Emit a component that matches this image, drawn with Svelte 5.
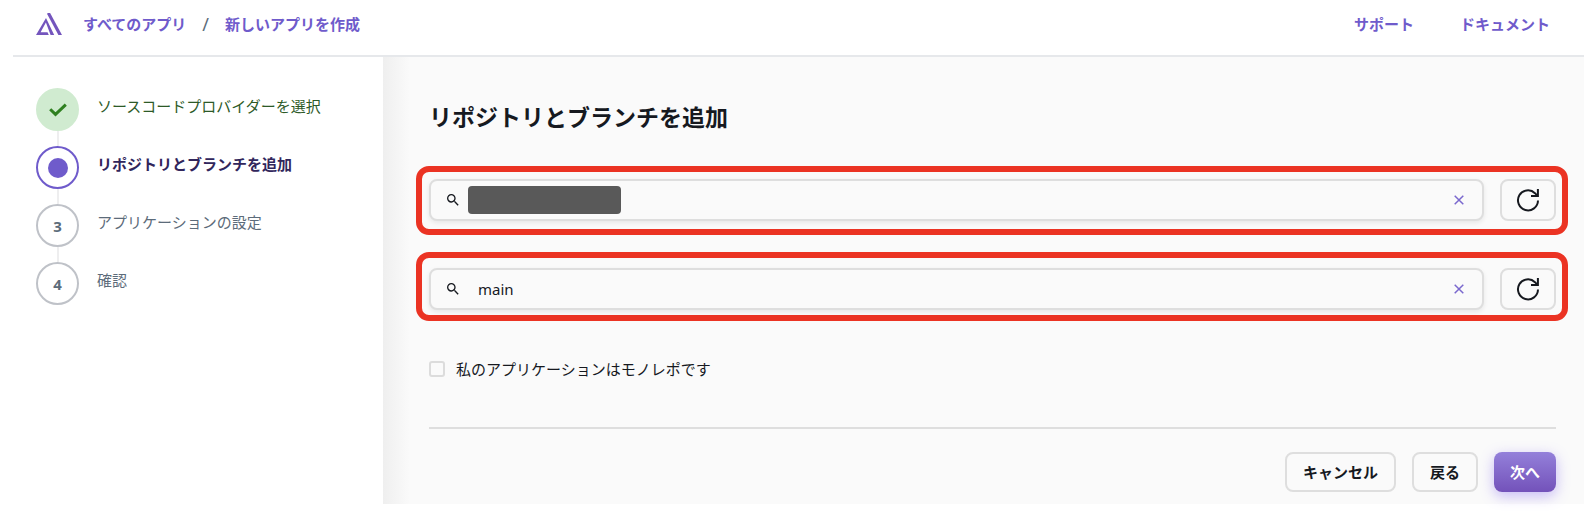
<script lang="ts">
	type StepStatus = 'complete' | 'current' | 'pending';

	interface Step {
		label: string;
		status: StepStatus;
	}

	const steps: Step[] = [
		{ label: 'ソースコードプロバイダーを選択', status: 'complete' },
		{ label: 'リポジトリとブランチを追加', status: 'current' },
		{ label: 'アプリケーションの設定', status: 'pending' },
		{ label: '確認', status: 'pending' }
	];

	let repository = $state('');
	let branch = $state('main');
	let repositoryHidden = $state(true);
	let monorepo = $state(false);

	function clearRepository() {
		repository = '';
		repositoryHidden = false;
	}

	function clearBranch() {
		branch = '';
	}
</script>

{#snippet searchIcon()}
	<svg class="search-icon" viewBox="0 0 24 24" fill="currentColor" aria-hidden="true">
		<path
			d="M15.5 14h-.79l-.28-.27A6.47 6.47 0 0 0 16 9.5 6.5 6.5 0 1 0 9.5 16c1.61 0 3.09-.59 4.23-1.57l.27.28v.79l5 4.99L20.49 19l-4.99-5zm-6 0C7.01 14 5 11.99 5 9.5S7.01 5 9.5 5 14 7.01 14 9.5 11.99 14 9.5 14z"
		/>
	</svg>
{/snippet}

{#snippet clearIcon()}
	<svg viewBox="0 0 10 10" fill="none" stroke="currentColor" stroke-width="1.5" aria-hidden="true">
		<path d="M.7 .7l8.6 8.6M9.3 .7L.7 9.3" />
	</svg>
{/snippet}

{#snippet refreshIcon()}
	<svg viewBox="0 0 22 22" fill="none" stroke="currentColor" stroke-width="2" aria-hidden="true">
		<path d="M21 11.5A10 10 0 1 1 18 4.2L20 6.4" />
		<path d="M20.9 0v7H14" />
	</svg>
{/snippet}

<div class="app">
	<header>
		<nav class="breadcrumb" aria-label="Breadcrumb">
			<a class="logo" href="/" aria-label="Home">
				<svg viewBox="0 0 26 22" fill="currentColor" aria-hidden="true">
					<path d="M10 5l8.2 17h-3.6L9.9 9.6 4.6 19.2h6.9l1.3 2.8H0z" />
					<path d="M11.4 0h2.7L26 22h-3.6L11.4 1.6z" />
				</svg>
			</a>
			<a href="/apps">すべてのアプリ</a>
			<span class="slash">/</span>
			<a href="/create">新しいアプリを作成</a>
		</nav>
		<nav class="links" aria-label="Help">
			<a href="/support">サポート</a>
			<a href="/docs">ドキュメント</a>
		</nav>
	</header>

	<div class="layout">
		<aside>
			<ol class="steps">
				{#each steps as step, i}
					<li class={step.status} aria-current={step.status === 'current' ? 'step' : undefined}>
						<span class="marker">
							{#if step.status === 'complete'}
								<svg viewBox="0 0 18 14" fill="none" stroke="currentColor" stroke-width="3">
									<path d="M1.2 6.2l5.3 5.2L16.8 1.6" />
								</svg>
							{:else if step.status === 'current'}
								<span class="dot"></span>
							{:else}
								{i + 1}
							{/if}
						</span>
						<span class="label">{step.label}</span>
					</li>
				{/each}
			</ol>
		</aside>

		<main>
			<h1>リポジトリとブランチを追加</h1>

			<div class="highlight repository">
				<div class="field">
					{@render searchIcon()}
					{#if repositoryHidden}
						<span class="redacted"></span>
					{/if}
					<input type="text" aria-label="リポジトリ" bind:value={repository} />
					<button class="clear" type="button" aria-label="クリア" onclick={clearRepository}>
						{@render clearIcon()}
					</button>
				</div>
				<button class="refresh" type="button" aria-label="更新">{@render refreshIcon()}</button>
			</div>

			<div class="highlight branch">
				<div class="field">
					{@render searchIcon()}
					<input type="text" aria-label="ブランチ" bind:value={branch} />
					<button class="clear" type="button" aria-label="クリア" onclick={clearBranch}>
						{@render clearIcon()}
					</button>
				</div>
				<button class="refresh" type="button" aria-label="更新">{@render refreshIcon()}</button>
			</div>

			<label class="checkbox">
				<input type="checkbox" bind:checked={monorepo} />
				私のアプリケーションはモノレポです
			</label>

			<hr />

			<div class="actions">
				<button class="button" type="button">キャンセル</button>
				<button class="button" type="button">戻る</button>
				<button class="button primary" type="button">次へ</button>
			</div>
		</main>
	</div>
</div>

<style>
	:global(body) {
		margin: 0;
		background: #fff;
	}

	.app {
		padding: 0 6px 12px 13px;
		color: #16191f;
		font-family: 'Noto Sans', 'Noto Sans CJK JP', sans-serif;
		font-size: 15px;
		line-height: 24px;
	}

	button,
	input {
		box-sizing: border-box;
		margin: 0;
		color: inherit;
		font: inherit;
	}

	button {
		cursor: pointer;
	}

	/* Header */
	header {
		display: flex;
		justify-content: space-between;
		padding: 12px 34px 19px 23px;
		border-bottom: 2px solid #e6e8eb;
	}

	header a {
		color: #6f5bcb;
		font-weight: 600;
		text-decoration: none;
	}

	.breadcrumb,
	.links {
		display: flex;
		align-items: center;
	}

	.logo {
		display: flex;
		margin-right: 21px;
	}

	.logo svg {
		width: 26px;
		height: 22px;
		color: #7455bd;
	}

	.slash {
		margin: 0 16px;
		color: #5c6b7a;
		font-size: 18px;
	}

	.links {
		gap: 46px;
	}

	.layout {
		display: flex;
	}

	/* Steps */
	aside {
		box-sizing: border-box;
		flex: 0 0 370px;
		padding: 31px 23px;
	}

	.steps {
		display: flex;
		flex-direction: column;
		gap: 15px;
		margin: 0;
		padding: 0;
		list-style: none;
	}

	.steps li {
		position: relative;
		display: flex;
		gap: 18px;
		color: #5c6b7a;
	}

	/* Line down to the next marker */
	.steps li:not(:last-child)::after {
		content: '';
		position: absolute;
		top: 100%;
		left: 21px;
		width: 2px;
		height: 15px;
		background: #eeeeef;
	}

	.marker {
		display: flex;
		align-items: center;
		justify-content: center;
		box-sizing: border-box;
		width: 43px;
		height: 43px;
		border: 2px solid #bfc2c8;
		border-radius: 50%;
		font-weight: 700;
	}

	.label {
		padding-top: 6px;
	}

	.steps .complete {
		color: #2d5a27;
	}

	.complete .marker {
		border-color: #d0ebd0;
		background: #d0ebd0;
		color: #2f8020;
	}

	.complete svg {
		width: 18px;
		height: 14px;
	}

	.steps .current {
		color: #31265c;
		font-weight: 600;
	}

	.current .marker {
		border-color: #6f5bcb;
	}

	.dot {
		width: 20px;
		height: 20px;
		border-radius: 50%;
		background: #6f5bcb;
	}

	/* Form */
	main {
		flex: 1;
		min-width: 0;
		padding: 43px 28px 12px 46px;
		background: linear-gradient(to right, #efefef, #fafafa 27px);
	}

	h1 {
		margin: 0;
		font-size: 23px;
		font-weight: 600;
		line-height: 34px;
	}

	.highlight {
		display: flex;
		gap: 16px;
		margin: 0 -12px 0 -13px;
		border: 6px solid #eb3323;
		border-radius: 13px;
	}

	.repository {
		margin-top: 32px;
		padding: 7px 6px 8px 7px;
	}

	.branch {
		margin-top: 17px;
		padding: 10px 6px 5px 7px;
	}

	.field {
		display: flex;
		flex: 1;
		align-items: center;
		box-sizing: border-box;
		height: 42px;
		min-width: 0;
		padding: 0 13px 0 14px;
		border: 2px solid #dedede;
		border-radius: 8px;
		background: #fafafa;
		box-shadow: 0 2px 5px rgb(0 0 0 / 8%);
	}

	.search-icon {
		flex: none;
		width: 16px;
		height: 16px;
	}

	.redacted {
		flex: none;
		width: 153px;
		height: 28px;
		margin-left: 7px;
		border-radius: 4px;
		background: #595959;
	}

	.field input {
		flex: 1;
		min-width: 0;
		padding: 0 17px;
		border: 0;
		outline: none;
		background: none;
	}

	.clear {
		display: flex;
		padding: 5px;
		border: 0;
		background: none;
		color: #7a68ce;
	}

	.clear svg {
		width: 10px;
		height: 10px;
	}

	.refresh {
		display: flex;
		align-items: center;
		justify-content: center;
		width: 56px;
		height: 42px;
		padding: 0;
		border: 2px solid #dedede;
		border-radius: 8px;
		background: #fafafa;
	}

	.refresh svg {
		width: 22px;
		height: 22px;
		overflow: visible;
	}

	.checkbox {
		display: flex;
		align-items: center;
		gap: 11px;
		width: fit-content;
		margin-top: 36px;
	}

	.checkbox input {
		width: 16px;
		height: 16px;
		border: 2px solid #dcdcdc;
		border-radius: 3px;
		appearance: none;
	}

	.checkbox input:checked {
		border-color: #6f5bcb;
		background: #6f5bcb;
	}

	hr {
		height: 2px;
		margin: 46px 0 23px;
		border: 0;
		background: #dedede;
	}

	.actions {
		display: flex;
		justify-content: flex-end;
		gap: 16px;
	}

	.button {
		height: 40px;
		padding: 0 16px;
		border: 2px solid #dedede;
		border-radius: 8px;
		background: #fafafa;
		font-weight: 600;
	}

	.primary {
		border: 0;
		background: linear-gradient(#9480da, #7352ba);
		box-shadow: 0 4px 14px rgb(120 90 240 / 40%);
		color: #fff;
	}
</style>
